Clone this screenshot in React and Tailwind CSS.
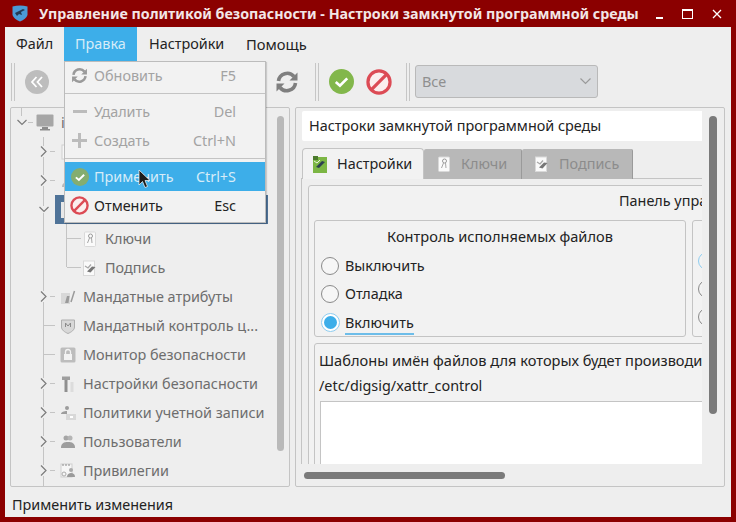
import React from "react";

const Chevron = ({ down }) =>
  down ? (
    <svg width="10" height="7" viewBox="0 0 10 7" className="shrink-0" fill="none" stroke="#7b7b7b" strokeWidth="1.200">
      <path d="M0.500 1L5 5.500L9.500 1" />
    </svg>
  ) : (
    <svg width="9" height="11" viewBox="0 0 9 11" className="shrink-0 bg-[#eeeeee]" fill="none" stroke="#7b7b7b" strokeWidth="1.200">
      <path d="M2 0.500L7 5.500L2 10.500" />
    </svg>
  );

const Shape = ({ kind }) => {
  const g = "#b9b9b9";
  const shapes = {
    doc: <><rect x="2" y="1" width="11" height="14" fill="#f7f7f7" stroke="#d0d0d0" /><path d="M4 5h7M4 8h7M4 11h7" stroke={g} /></>,
    person: <><circle cx="8" cy="5" r="3" fill={g} /><path d="M2 14c0-4 3-5 6-5s6 1 6 5z" fill={g} /></>,
    key: <><rect x="2.500" y="1" width="11" height="14.500" rx="1" fill="#fafafa" stroke="#d9d9d9" /><circle cx="8.500" cy="5" r="2" fill="none" stroke="#9a9a9a" /><path d="M7.500 7l-2 5M9.500 7l0.500 5" stroke="#a6a6a6" /></>,
    sign: <><rect x="1.500" y="1" width="11" height="14.500" fill="#fafafa" stroke="#d9d9d9" /><path d="M5 11.500l5-5 3.500 0.500 -5 5.500z" fill="#777" /><path d="M3 6l3 2 3-3.500" stroke="#a8a8a8" fill="none" strokeWidth="1.300" /></>,
    attr: <><rect x="1" y="4" width="9" height="11" fill="#d8d8d8" /><path d="M5 14l2-7h2.500l-1 7z" fill="#9a9a9a" /><path d="M11 13l3.500-11" stroke="#9a9a9a" strokeWidth="1.500" /></>,
    shield: <><path d="M1.500 2h13v7c0 3-3 5-6.500 6.500C4.500 14 1.500 12 1.500 9z" fill="#d8d8d8" stroke="#aeaeae" /><path d="M5.500 9V5l2.500 3 2.500-3v4" stroke="#8a8a8a" fill="none" /></>,
    lock: <><rect x="0.500" y="0.500" width="15" height="15" rx="1.500" fill="#bdbdbd" /><rect x="4" y="7" width="8" height="6" fill="#f3f3f3" /><path d="M5.500 7V5a2.500 2.500 0 0 1 5 0v2" stroke="#f3f3f3" fill="none" strokeWidth="1.300" /></>,
    tools: <><rect x="2" y="0.500" width="8" height="3.500" fill="#9e9e9e" /><rect x="4.500" y="4" width="3" height="12" fill="#8f8f8f" /><rect x="10.500" y="6" width="3" height="10" fill="#dcdcdc" /></>,
    policy: <><circle cx="7" cy="3" r="2" fill="#9c9c9c" /><path d="M1 9c0-2 3-3 6-3v3z" fill="#9c9c9c" /><rect x="6" y="9" width="10" height="6" fill="#d8d8d8" /><rect x="10" y="11" width="3" height="2" fill="#fff" /></>,
    users: <><circle cx="6" cy="4" r="2.500" fill="#a5a5a5" /><circle cx="10" cy="4" r="2.500" fill="#b5b5b5" /><path d="M1 14c0-5 3-6 7-6s7 1 7 6z" fill="#9d9d9d" /></>,
    priv: <><rect x="1" y="1" width="11" height="13" fill="#f6f6f6" stroke="#cfcfcf" /><path d="M3 1v2M6 1v2M9 1v2" stroke="#888" /><circle cx="4" cy="11" r="2" fill="none" stroke="#aaa" /><circle cx="11" cy="7" r="2" fill="#aaa" /><path d="M7 14c0-3 2-4 4-4s4 1 4 4z" fill="#9a9a9a" /></>,
  };
  return <svg width="16" height="16" viewBox="0 0 16 16" className="shrink-0">{shapes[kind]}</svg>;
};

const Refresh = ({ size, color }) => (
  <svg width={size} height={size} viewBox="0 0 24 24" className="shrink-0" fill="none" stroke={color} strokeWidth="3.600">
    <path d="M3.500 11A8.800 8.800 0 0 1 19 6.500" />
    <path d="M20.500 13A8.800 8.800 0 0 1 5 17.500" />
    <path d="M22.500 2.500v8h-8z" fill={color} stroke="none" />
    <path d="M1.500 21.500v-8h8z" fill={color} stroke="none" />
  </svg>
);

const Check = ({ size, bg = "#82b74b" }) => (
  <svg width={size} height={size} viewBox="0 0 24 24" className="shrink-0">
    <circle cx="12" cy="12" r="12" fill={bg} />
    <path d="M6.500 12.500l4 3.500 7-7" fill="none" stroke="#fff" strokeWidth="2.600" />
  </svg>
);

const Ban = ({ size }) => (
  <svg width={size} height={size} viewBox="0 0 24 24" className="shrink-0" fill="none" stroke="#dc4b55" strokeWidth="3">
    <circle cx="12" cy="12" r="10.200" fill="#fbeeee" />
    <path d="M5 19L19 5" />
  </svg>
);

const Row = ({ icon, label, expand }) => (
  <div className="flex items-center h-[29px] whitespace-nowrap">
    {expand ? (
      <>
        <span className="-ml-[5px] mr-[2px] flex"><Chevron /></span>
        <span className="w-[5px] h-px bg-[#c4c4c4] shrink-0" />
      </>
    ) : (
      <span className="w-[11px] h-px bg-[#c4c4c4] shrink-0" />
    )}
    <span className="ml-[5px] mr-[7px] flex"><Shape kind={icon} /></span>
    <span>{label}</span>
  </div>
);

const ChildRow = ({ icon, label }) => (
  <div className="flex items-center h-[29px]">
    <span className="w-[14px] h-px bg-[#c4c4c4] shrink-0" />
    <span className="mx-[1px] flex"><Shape kind={icon} /></span>
    <span className="ml-[6px]">{label}</span>
  </div>
);

const MenuItem = ({ icon, label, key2, disabled, active }) => (
  <div className={`flex items-center h-[29px] pl-[5px] pr-[29px] ${active ? "bg-[#3daee9] text-[#d6ecf8]" : disabled ? "text-[#a3a3a3]" : "text-[#222222]"}`}>
    <span className="w-[19px] flex justify-center shrink-0">{icon}</span>
    <span className="ml-[5px] flex-1">{label}</span>
    <span>{key2}</span>
  </div>
);

const Radio = ({ label, checked, underline }) => (
  <div className="flex items-center h-[28px] pl-[6px]">
    {checked ? (
      <span className="w-[19px] h-[19px] rounded-full border border-[#8fcdf0] bg-white flex items-center justify-center shrink-0">
        <span className="w-[13px] h-[13px] rounded-full bg-[#3daee9]" />
      </span>
    ) : (
      <span className="w-[18px] h-[18px] rounded-full border border-[#8a8a8a] bg-[#f6f6f6] shrink-0" />
    )}
    {underline ? (
      <span className="ml-[5px] h-[24px] leading-[23px] border-b-2 border-[#6dbde9] mt-[1px]">{label}</span>
    ) : (
      <span className="ml-[6px]">{label}</span>
    )}
  </div>
);

const Tab = ({ icon, label, active, w }) => (
  <div className={`flex items-center ${w} ${active ? "h-[31px] pl-[9px] bg-[#f2f2f2] border border-b-0 border-[#c4c4c4] rounded-t text-[#232323]" : "h-[30px] pl-[12px] bg-[#b8b8b8] text-[#8c8c8c] border-r border-[#9a9a9a] rounded-t-[2px]"}`}>
    {icon}
    <span className="ml-[9px]">{label}</span>
  </div>
);

export default function App() {
  return (
    <div className="relative w-[736px] h-[522px] overflow-hidden bg-[#8b0000] flex flex-col text-[14.4px] text-[#232323]" style={{ fontFamily: '"Noto Sans", sans-serif' }}>
      {/* Title bar */}
      <div className="h-[27px] shrink-0 flex items-center pl-[12px] pr-[14px] text-[#f3e6e6] font-bold text-[14.25px]">
        <svg width="16" height="17" viewBox="0 0 16 17" className="shrink-0">
          <path d="M0.500 1.500Q8 -0.500 15.500 1.500V10Q14 14 8 16.500Q2 14 0.500 10z" fill="#4b9ad6" />
          <path d="M3 8l8-4 2 1-4 2 1 3-3-1-2 2z" fill="#233a55" />
        </svg>
        <span className="ml-[11px] flex-1 whitespace-nowrap">Управление политикой безопасности - Настроки замкнутой программной среды</span>
        <div className="flex items-center gap-[19px] shrink-0">
          <span className="w-[7px] h-[2px] bg-white mt-[9px]" />
          <span className="w-[11px] h-[10px] border border-t-2 border-white" />
          <svg width="10" height="10" viewBox="0 0 10 10" stroke="#fff" strokeWidth="1.300"><path d="M1 1l8 8M9 1l-8 8" /></svg>
        </div>
      </div>

      {/* Client */}
      <div className="flex-1 mx-[5px] mb-[5px] bg-[#eeeeee] flex flex-col min-h-0 relative">
        {/* Menu bar */}
        <div className="h-[34px] shrink-0 flex text-[#232323]">
          <span className="pl-[11px] w-[59px] leading-[34px]">Файл</span>
          <span className="w-[73px] pl-[11px] bg-[#3daee9] text-[#d6ecf8] leading-[34px]">Правка</span>
          <span className="pl-[12px] w-[98px] leading-[34px]">Настройки</span>
          <span className="pl-[11px] leading-[34px] text-[14.7px]">Помощь</span>
        </div>

        {/* Toolbar */}
        <div className="h-[46px] shrink-0 flex items-center pl-[6px] pb-[5px]">
          <span className="w-[4px] h-[38px] border-x border-[#c6c6c6]" />
          <span className="ml-[10px] w-[24px] h-[24px] rounded-full bg-[#bdbdbd] flex items-center justify-center text-white">
            <svg width="14" height="12" viewBox="0 0 14 12" fill="none" stroke="#fff" strokeWidth="1.800"><path d="M6.500 1L2 6l4.500 5M12 1L7.500 6l4.500 5" /></svg>
          </span>
          <span className="ml-[226px] flex"><Refresh size={24} color="#7f7f7f" /></span>
          <span className="ml-[16px] w-[4px] h-[38px] border-x border-[#c6c6c6]" />
          <span className="ml-[10px] flex"><Check size={25} /></span>
          <span className="ml-[12px] flex"><Ban size={26} /></span>
          <span className="ml-[14px] w-[4px] h-[38px] border-x border-[#c6c6c6]" />
          <div className="ml-[5px] w-[183px] h-[33px] rounded-[3px] border border-[#b9b9b9] bg-[#d8dadd] text-[#8f8f8f] flex items-center justify-between pl-[6px] pr-[6px]">
            <span>Все</span>
            <svg width="11" height="7" viewBox="0 0 11 7" fill="none" stroke="#9a9a9a" strokeWidth="1.200"><path d="M0.500 0.500L5.500 5.500L10.500 0.500" /></svg>
          </div>
        </div>

        {/* Main */}
        <div className="h-[380px] shrink-0 flex pl-[5px] pr-[6px] gap-[5px]">
          {/* Tree */}
          <div className="w-[280px] shrink-0 border border-[#c4c4c4] rounded-[2px] flex overflow-hidden text-[#6d6d6d]">
            <div className="flex-1 min-w-0">
              <div className="relative flex items-center h-[29px] pl-[6px]">
                <span className="absolute left-[10px] top-0 w-px h-[8px] bg-[#c4c4c4]" />
                <Chevron down />
                <span className="w-[5px] h-px bg-[#c4c4c4] ml-[1px]" />
                <span className="ml-[3px] flex">
                  <svg width="18" height="17" viewBox="0 0 18 17"><rect x="0.500" y="0.500" width="17" height="12" rx="1" fill="#a6a6a6" /><rect x="6" y="13" width="6" height="2" fill="#8c8c8c" /><rect x="4" y="15" width="10" height="1.500" fill="#8c8c8c" /></svg>
                </span>
                <span className="ml-[7px]">i</span>
              </div>
              <div className="ml-[32px] border-l border-[#c4c4c4] h-[350px]">
                <Row icon="doc" label="" expand />
                <Row icon="person" label="" expand />
                <div className="flex items-center h-[29px] -ml-[5px]">
                  <span className="w-[10px] flex bg-[#eeeeee]"><Chevron down /></span>
                  <div className="ml-[6px] w-[213px] h-[29px] bg-[#4f7398] flex items-center pl-[6px]">
                    <span className="w-[9px] h-[16px] bg-[#e8e8e8]" />
                  </div>
                </div>
                <div className="ml-[22px] h-[43px] border-l border-[#c4c4c4]">
                  <ChildRow icon="key" label="Ключи" />
                  <ChildRow icon="sign" label="Подпись" />
                </div>
                <div className="h-[15px]" />
                <Row icon="attr" label="Мандатные атрибуты" expand />
                <Row icon="shield" label="Мандатный контроль ц..." />
                <Row icon="lock" label="Монитор безопасности" />
                <Row icon="tools" label="Настройки безопасности" expand />
                <Row icon="policy" label="Политики учетной записи" expand />
                <Row icon="users" label="Пользователи" expand />
                <Row icon="priv" label="Привилегии" expand />
              </div>
            </div>
            <div className="w-[14px] shrink-0 pt-[8px] flex justify-center pr-[4px]">
              <span className="w-[7px] h-[335px] rounded-full bg-[#b9b9b9]" />
            </div>
          </div>

          {/* Right panel */}
          <div className="flex-1 min-w-0 border border-[#c4c4c4] rounded-[2px] flex flex-col overflow-hidden">
            <div className="flex h-[356px] shrink-0">
              <div className="w-[406px] shrink-0 pl-[5px] pt-[3px] overflow-hidden">
                <div className="ml-[1px] w-[400px] h-[30px] bg-white rounded-l-[2px] pl-[7px] leading-[30px] text-[#232323]">Настроки замкнутой программной среды</div>
                <div className="ml-[1px] flex mt-[7px] h-[31px] items-end relative z-10">
                  <Tab active w="w-[122px]" label="Настройки" icon={
                    <svg width="16" height="19" viewBox="0 0 16 19" className="shrink-0"><rect x="1" y="2" width="14" height="16" fill="#7cb644" /><rect x="1" y="1" width="5" height="4" fill="#4b7a2c" /><path d="M4 12l6-6 3 1-6 6z" fill="#2d4150" /><path d="M2 6l3 2 3-3" stroke="#eaf6dd" fill="none" /></svg>
                  } />
                  <Tab w="w-[98px]" label="Ключи" icon={<Shape kind="key" />} />
                  <Tab w="w-[111px]" label="Подпись" icon={<Shape kind="sign" />} />
                </div>
                <div className="-mt-px border-l border-t border-[#c4c4c4] pl-[6px] pt-[6px] w-[440px] h-[300px]">
                  <div className="w-[420px] h-[300px] border border-[#c4c4c4] rounded-[3px] bg-[#f2f2f2] px-[5px]">
                    <div className="h-[34px] leading-[30px] pl-[305px] whitespace-nowrap">Панель управления</div>
                    <div className="flex gap-[6px] h-[117px]">
                      <div className="w-[372px] shrink-0 border border-[#c4c4c4] rounded-[3px] pt-[3px]">
                        <div className="text-center leading-[24px] h-[28px] text-[14.6px]">Контроль исполняемых файлов</div>
                        <Radio label="Выключить" />
                        <Radio label="Отладка" />
                        <Radio label="Включить" checked underline />
                      </div>
                      <div className="w-[40px] shrink-0 border border-[#c4c4c4] rounded-[3px] pt-[31px] pl-[5px] flex flex-col gap-[10px]">
                        <span className="w-[18px] h-[18px] rounded-full border border-[#8fcdf0]" />
                        <span className="w-[18px] h-[18px] rounded-full border border-[#8a8a8a]" />
                        <span className="w-[18px] h-[18px] rounded-full border border-[#8a8a8a]" />
                      </div>
                    </div>
                    <div className="mt-[6px] w-[420px] h-[140px] border border-[#c4c4c4] rounded-[3px] pl-[4px] pt-[4px]">
                      <div className="leading-[24px] h-[24px] whitespace-nowrap text-[14.6px]">Шаблоны имён файлов для которых будет производиться контроль</div>
                      <div className="leading-[24px] h-[24px] mt-[2px]">/etc/digsig/xattr_control</div>
                      <div className="ml-[1px] mt-[3px] h-[100px] bg-white border border-[#c4c4c4]" />
                    </div>
                  </div>
                </div>
              </div>
              <div className="flex-1 pt-[8px] pl-[7px]">
                <span className="block w-[8px] h-[298px] rounded-full bg-[#7a7a7a]" />
              </div>
            </div>
            <div className="flex-1 pl-[8px] pt-[8px]">
              <span className="block w-[201px] h-[7px] rounded-full bg-[#7a7a7a]" />
            </div>
          </div>
        </div>

        {/* Status */}
        <div className="flex-1 pl-[7px] leading-[36px] text-[#232323]">Применить изменения</div>

        {/* Dropdown menu */}
        <div className="absolute left-[59px] top-[34px] w-[202px] h-[162px] bg-[#f2f2f2] border border-[#bcbcbc] shadow-[1px_1px_1px_rgba(0,0,0,0.15)]">
          <div className="-mt-px">
            <MenuItem disabled label="Обновить" key2="F5" icon={<Refresh size={17} color="#9a9a9a" />} />
          </div>
          <div className="h-px bg-[#c4c4c4] mt-[3px]" />
          <div className="mt-[3px]">
            <MenuItem disabled label="Удалить" key2="Del" icon={<span className="w-[14px] h-[3px] bg-[#bcbcbc]" />} />
            <MenuItem disabled label="Создать" key2="Ctrl+N" icon={
              <svg width="15" height="15" viewBox="0 0 15 15" fill="#bcbcbc"><rect x="6" y="0" width="3" height="15" /><rect x="0" y="6" width="15" height="3" /></svg>
            } />
          </div>
          <div className="h-px bg-[#c4c4c4] mt-[3px]" />
          <div className="mt-[3px]">
            <MenuItem active label="Применить" key2="Ctrl+S" icon={<Check size={18} bg="#84ad70" />} />
            <MenuItem label="Отменить" key2="Esc" icon={<Ban size={19} />} />
          </div>
        </div>

        {/* Mouse cursor */}
        <svg width="13" height="20" viewBox="0 0 13 20" className="absolute left-[133px] top-[142px]">
          <path d="M1 1v15l3.500-3.500 2.500 6 2.500-1-2.500-6h5z" fill="#1c1c1c" stroke="#fff" strokeWidth="0.700" />
        </svg>
      </div>
    </div>
  );
}
